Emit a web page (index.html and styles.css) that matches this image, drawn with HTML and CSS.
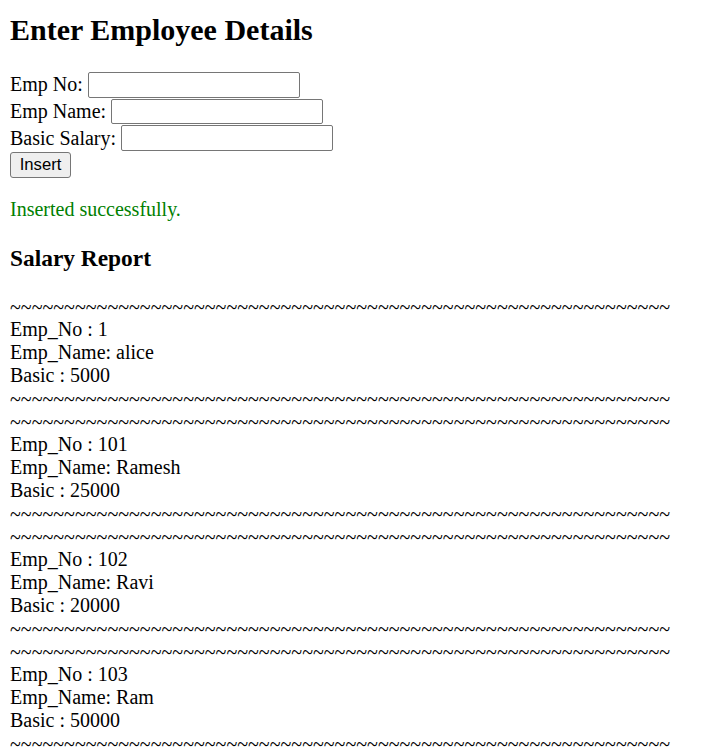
FILE: index.html
```html
<!DOCTYPE html>
<html>
<head>
<meta charset="utf-8">
<title>Employee Details</title>
<link rel="stylesheet" href="styles.css">
</head>
<body class="page">
<h2 class="title">Enter Employee Details</h2>
<form class="emp-form">
  <div class="row">Emp No: <input class="field" type="text"></div>
  <div class="row">Emp Name: <input class="field" type="text"></div>
  <div class="row">Basic Salary: <input class="field" type="text"></div>
  <div class="row"><button class="btn" type="button">Insert</button></div>
</form>
<p class="msg">Inserted successfully.</p>
<h3 class="subtitle">Salary Report</h3>
<div class="report">
<span class="sep">~~~~~~~~~~~~~~~~~~~~~~~~~~~~~~~~~~~~~~~~~~~~~~~~~~~~~~~~~~~~~</span><br>
Emp_No : 1<br>
Emp_Name: alice<br>
Basic : 5000<br>
<span class="sep">~~~~~~~~~~~~~~~~~~~~~~~~~~~~~~~~~~~~~~~~~~~~~~~~~~~~~~~~~~~~~</span><br>
<span class="sep">~~~~~~~~~~~~~~~~~~~~~~~~~~~~~~~~~~~~~~~~~~~~~~~~~~~~~~~~~~~~~</span><br>
Emp_No : 101<br>
Emp_Name: Ramesh<br>
Basic : 25000<br>
<span class="sep">~~~~~~~~~~~~~~~~~~~~~~~~~~~~~~~~~~~~~~~~~~~~~~~~~~~~~~~~~~~~~</span><br>
<span class="sep">~~~~~~~~~~~~~~~~~~~~~~~~~~~~~~~~~~~~~~~~~~~~~~~~~~~~~~~~~~~~~</span><br>
Emp_No : 102<br>
Emp_Name: Ravi<br>
Basic : 20000<br>
<span class="sep">~~~~~~~~~~~~~~~~~~~~~~~~~~~~~~~~~~~~~~~~~~~~~~~~~~~~~~~~~~~~~</span><br>
<span class="sep">~~~~~~~~~~~~~~~~~~~~~~~~~~~~~~~~~~~~~~~~~~~~~~~~~~~~~~~~~~~~~</span><br>
Emp_No : 103<br>
Emp_Name: Ram<br>
Basic : 50000<br>
<span class="sep">~~~~~~~~~~~~~~~~~~~~~~~~~~~~~~~~~~~~~~~~~~~~~~~~~~~~~~~~~~~~~</span><br>
</div>
</body>
</html>
```

FILE: styles.css
```css
html { background: #fff; }
.page {
  margin: 0;
  padding: 10px;
  font-family: "Liberation Serif", "Times New Roman", serif;
  font-size: 20px;
  color: #000;
}
.title {
  font-size: 30px;
  font-weight: bold;
  margin: 2.6px 0 25px;
}
.emp-form { margin: 0; }
.row {
  height: 26.67px;
  display: flex;
  align-items: center;
}
.field {
  box-sizing: border-box;
  width: 212px;
  height: 25.5px;
  margin-left: 5px;
  border: 1px solid #767676;
  border-radius: 2px;
  padding: 1px 2px;
  font-family: "Liberation Sans", Arial, sans-serif;
  font-size: 16.67px;
  background: #fff;
}
.btn {
  box-sizing: border-box;
  width: 61px;
  height: 26px;
  padding: 0;
  background: #efefef;
  border: 1px solid #767676;
  border-radius: 3px;
  font-family: "Liberation Sans", Arial, sans-serif;
  font-size: 16.67px;
  color: #000;
}
.msg {
  color: #008000;
  margin: 20px 0;
}
.subtitle {
  font-size: 23.4px;
  font-weight: bold;
  margin: 23.4px 0;
}
.report { margin: 0; }
.sep {
  line-height: 0;
  vertical-align: -1px;
}
```
